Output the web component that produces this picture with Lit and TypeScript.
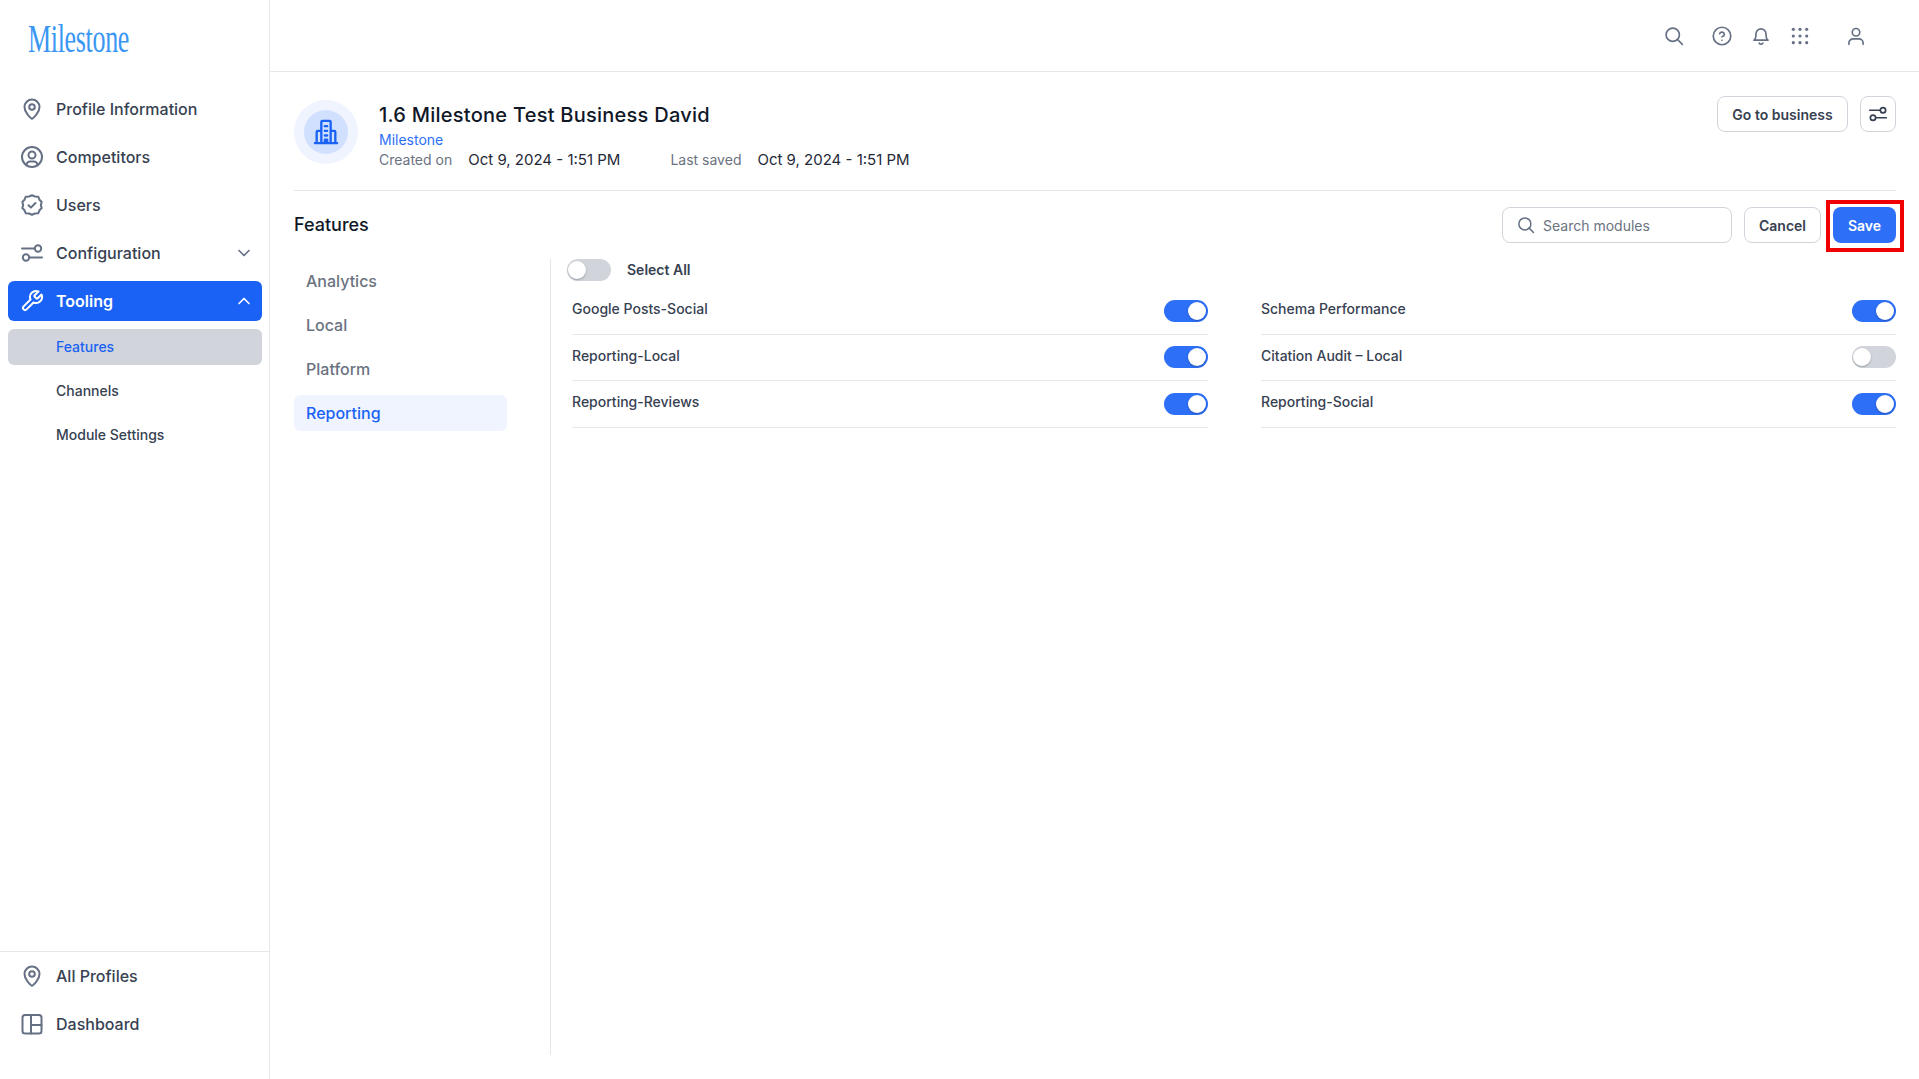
import { LitElement, html, css, svg } from 'lit';
import { customElement } from 'lit/decorators.js';

const icon = (body: unknown, size = 24) => html`
  <svg class="icon" width=${size} height=${size} viewBox="0 0 24 24" fill="none" stroke="currentColor"
    stroke-width="2" stroke-linecap="round" stroke-linejoin="round" aria-hidden="true">${body}</svg>
`;

const pin = svg`<path d="M12 21.8c-.5 0-2.6-2-4.300-4.100C5.900 15.500 4.500 13 4.500 10a7.500 7.500 0 0 1 15 0c0 3-1.400 5.500-3.200 7.700-1.700 2.100-3.800 4.100-4.300 4.100Z"/><circle cx="12" cy="10" r="2.800"/>`;
const person = svg`<circle cx="12" cy="12" r="10"/><circle cx="12" cy="10" r="3.500"/><path d="M6.500 19.500c.6-2 2-3 3.500-3h4c1.500 0 2.900 1 3.500 3"/>`;
const badge = svg`<path d="m12 2.300 3 1.200 3.200.2 1.300 3 2.200 2.300L20.800 12l.9 3-2.200 2.300-1.300 3-3.200.2-3 1.200-3-1.200-3.200-.2-1.300-3L2.300 15l.9-3-.9-3 2.200-2.300 1.300-3 3.200-.2 3-1.200Z"/><path d="m8.500 12.300 2.400 2.300 4.600-4.600"/>`;
const sliders = svg`<path d="M2 7.500h12.500M9.500 16.500H22"/><circle cx="18" cy="7.500" r="3.200"/><circle cx="6" cy="16.500" r="3.200"/>`;
const wrench = svg`<path d="M14.700 6.300a1 1 0 0 0 0 1.400l1.600 1.600a1 1 0 0 0 1.400 0l3.770-3.770a6 6 0 0 1-7.940 7.940l-6.910 6.910a2.120 2.120 0 0 1-3-3l6.910-6.910a6 6 0 0 1 7.940-7.940l-3.760 3.760z"/>`;
const layout = svg`<rect x="2.500" y="3" width="19" height="18.500" rx="2.500"/><path d="M11 3v18.500M11 13h10.500"/>`;
const chevDown = svg`<path d="m6 9 6 6 6-6"/>`;
const chevUp = svg`<path d="m6 15 6-6 6 6"/>`;
const search = svg`<circle cx="10.500" cy="10.500" r="8"/><path d="m22 22-5.800-5.800"/>`;
const help = svg`<circle cx="12" cy="12" r="10.500"/><path d="M9.200 9.200a2.900 2.900 0 0 1 5.600 1c0 1.900-2.800 2.700-2.800 2.700"/><path d="M12 17.200h.01"/>`;
const bell = svg`<path d="M6 9.500a6 6 0 0 1 12 0c0 6 2.500 7.500 2.500 7.500h-17S6 15.500 6 9.500Z"/><path d="M9.800 20.500a2.500 2.500 0 0 0 4.400 0"/>`;
const user = svg`<circle cx="12" cy="7.500" r="4.500"/><path d="M3.500 22v-1.500a5 5 0 0 1 5-5h7a5 5 0 0 1 5 5V22"/>`;
const grid = svg`${[4, 12, 20].flatMap((y) =>
  [4, 12, 20].map((x) => svg`<circle cx=${x} cy=${y} r="1.900" fill="currentColor" stroke="none"/>`),
)}`;
const building = svg`<path d="M2.500 21.500h19M8 21.500V3.500a1 1 0 0 1 1-1h6a1 1 0 0 1 1 1v18M8 11H5a1 1 0 0 0-1 1v9.500M16 11h3a1 1 0 0 1 1 1v9.500M11 7h2M11 11h2M11 15h2M11 21v-2.500h2V21"/>`;

interface Feature {
  name: string;
  on: boolean;
}

const leftFeatures: Feature[] = [
  { name: 'Google Posts-Social', on: true },
  { name: 'Reporting-Local', on: true },
  { name: 'Reporting-Reviews', on: true },
];

const rightFeatures: Feature[] = [
  { name: 'Schema Performance', on: true },
  { name: 'Citation Audit – Local', on: false },
  { name: 'Reporting-Social', on: true },
];

@customElement('app-root')
export class AppRoot extends LitElement {
  static styles = css`
    :host {
      display: grid;
      grid-template-columns: 270px 1fr;
      height: 100vh;
      background: #fff;
      font-family: Inter, 'Liberation Sans', sans-serif;
      color: #374151;
    }

    * {
      box-sizing: border-box;
    }

    .icon {
      flex: none;
      display: block;
    }

    /* sidebar */
    .sidebar {
      display: flex;
      flex-direction: column;
      border-right: 1px solid #e5e7eb;
    }

    .logo {
      height: 89px;
      padding: 18px 0 0 28px;
      color: #3a97f3;
      font-family: 'Liberation Serif', serif;
      font-size: 40px;
      line-height: 42px;
      letter-spacing: -0.5px;
      white-space: nowrap;
      transform: scaleX(0.65);
      transform-origin: 28px 0;
    }

    .nav {
      flex: 1;
      display: flex;
      flex-direction: column;
      gap: 8px;
      padding: 0 7px 0 8px;
    }

    .item {
      display: flex;
      align-items: center;
      gap: 12px;
      height: 40px;
      padding: 0 12px;
      border-radius: 6px;
      font-size: 16px;
      font-weight: 500;
      color: #374151;
    }

    .item .icon:first-child {
      color: #667085;
    }

    .item .chev {
      margin-left: auto;
      margin-right: -4px;
      color: #667085;
    }

    .item.active {
      background: #1a62f5;
      color: #fff;
      font-weight: 600;
    }

    .item.active .icon {
      color: #fff;
    }

    .sub {
      display: flex;
      align-items: center;
      height: 36px;
      padding: 0 0 2px 48px;
      border-radius: 6px;
      font-size: 14px;
      font-weight: 500;
      color: #374151;
    }

    .sub.active {
      background: #d1d5db;
      color: #1a62f5;
    }

    .foot {
      display: flex;
      flex-direction: column;
      gap: 8px;
      padding: 4px 7px 35px 8px;
      border-top: 1px solid #e5e7eb;
    }

    /* main */
    .main {
      display: flex;
      flex-direction: column;
      min-width: 0;
    }

    .topbar {
      display: flex;
      align-items: center;
      justify-content: flex-end;
      gap: 19px;
      height: 72px;
      padding-right: 53px;
      border-bottom: 1px solid #e5e7eb;
      color: #667085;
    }

    .topbar .first {
      margin-right: 9px;
    }

    .topbar .last {
      margin-left: 17px;
    }

    .content {
      flex: 1;
      display: flex;
      flex-direction: column;
      padding: 0 23px 24px 24px;
      min-height: 0;
    }

    .business {
      display: flex;
      align-items: flex-start;
      padding: 24px 0 20px;
      border-bottom: 1px solid #e5e7eb;
    }

    .avatar {
      width: 64px;
      height: 64px;
      margin-top: 4px;
      display: flex;
      align-items: center;
      justify-content: center;
      border-radius: 50%;
      background: #eff4ff;
    }

    .avatar-inner {
      width: 44px;
      height: 44px;
      display: flex;
      align-items: center;
      justify-content: center;
      border-radius: 50%;
      background: #d1e0ff;
      color: #1a62f5;
    }

    .info {
      margin: 5px 0 0 21px;
    }

    .title {
      font-size: 20px;
      line-height: 28px;
      font-weight: 500;
      letter-spacing: 0.25px;
      color: #101828;
    }

    .org {
      margin-top: 1px;
      font-size: 14px;
      line-height: 20px;
      color: #2d6ff7;
    }

    .dates {
      display: flex;
      font-size: 14px;
      line-height: 20px;
      color: #6b7280;
    }

    .dates b {
      font-size: 15px;
      font-weight: 400;
      color: #1f2937;
    }

    .dates .created {
      margin-right: 16px;
    }

    .dates .saved {
      margin: 0 16px 0 50px;
    }

    .actions {
      margin-left: auto;
      display: flex;
      gap: 12px;
    }

    .btn {
      display: flex;
      align-items: center;
      justify-content: center;
      height: 36px;
      padding: 0;
      border: 1px solid #d1d5db;
      border-radius: 8px;
      background: #fff;
      font: 600 14px Inter, 'Liberation Sans', sans-serif;
      color: #374151;
    }

    .btn.go {
      width: 131px;
    }

    .btn.cancel {
      width: 77px;
    }

    .btn.square {
      width: 36px;
    }

    .btn.primary {
      position: relative;
      width: 63px;
      border: none;
      background: #2d6ff7;
      color: #fff;
    }

    .btn.primary::after {
      content: '';
      position: absolute;
      inset: -7px -8px -9px -7px;
      border: 4px solid #f00000;
    }

    .toolbar {
      display: flex;
      align-items: center;
      justify-content: space-between;
      padding: 16px 0;
    }

    .toolbar h2 {
      margin: 0;
      padding-bottom: 2px;
      font-size: 18px;
      font-weight: 500;
      color: #101828;
    }

    .search {
      display: flex;
      align-items: center;
      gap: 8px;
      width: 230px;
      height: 36px;
      padding: 0 14px;
      border: 1px solid #d1d5db;
      border-radius: 8px;
      color: #667085;
    }

    .search input {
      flex: 1;
      min-width: 0;
      border: none;
      outline: none;
      padding: 0;
      font: 400 14px Inter, 'Liberation Sans', sans-serif;
    }

    .search input::placeholder {
      color: #6b7280;
      opacity: 1;
    }

    .body {
      flex: 1;
      display: flex;
      min-height: 0;
    }

    .cats {
      flex: none;
      width: 256px;
      display: flex;
      flex-direction: column;
      gap: 8px;
      padding-top: 4px;
    }

    .cat {
      display: flex;
      align-items: center;
      width: 213px;
      height: 36px;
      padding-left: 12px;
      border-radius: 6px;
      font-size: 16px;
      font-weight: 500;
      color: #6b7280;
    }

    .cat.active {
      background: #eff4ff;
      color: #1a62f5;
    }

    .panel {
      flex: 1;
      min-width: 0;
      border-left: 1px solid #e5e7eb;
    }

    .select-all {
      display: flex;
      align-items: center;
      gap: 16px;
      height: 22px;
      margin: 0 0 7.6px 16px;
      font-size: 14px;
      font-weight: 600;
    }

    .select-all span {
      margin-bottom: 2px;
    }

    .columns {
      display: grid;
      grid-template-columns: 636px 635px;
      justify-content: space-between;
      padding-left: 21px;
    }

    .row {
      display: flex;
      align-items: center;
      justify-content: space-between;
      height: 46.4px;
      border-bottom: 1px solid #e5e7eb;
      font-size: 14px;
      font-weight: 500;
    }

    .row span {
      margin-bottom: 5px;
    }

    .row .toggle {
      margin-bottom: 1px;
    }

    .toggle {
      flex: none;
      width: 44px;
      height: 22px;
      padding: 2px;
      display: flex;
      border-radius: 11px;
      background: #d1d5db;
    }

    .toggle i {
      width: 18px;
      height: 18px;
      border-radius: 50%;
      background: #fff;
      box-shadow: 0 1px 2px rgba(16, 24, 40, 0.3);
    }

    .toggle.off {
      padding-left: 1px;
    }

    .toggle.on {
      justify-content: flex-end;
      background: #2d6ff7;
    }
  `;

  private toggle(on: boolean) {
    return html`<div class="toggle ${on ? 'on' : 'off'}"><i></i></div>`;
  }

  private row(f: Feature) {
    return html`<div class="row"><span>${f.name}</span>${this.toggle(f.on)}</div>`;
  }

  render() {
    return html`
      <aside class="sidebar">
        <div class="logo">Milestone</div>
        <nav class="nav">
          <div class="item">${icon(pin)}Profile Information</div>
          <div class="item">${icon(person)}Competitors</div>
          <div class="item">${icon(badge)}Users</div>
          <div class="item">${icon(sliders)}Configuration<span class="chev">${icon(chevDown, 20)}</span></div>
          <div class="item active">${icon(wrench)}Tooling<span class="chev">${icon(chevUp, 20)}</span></div>
          <div class="sub active">Features</div>
          <div class="sub">Channels</div>
          <div class="sub">Module Settings</div>
        </nav>
        <div class="foot">
          <div class="item">${icon(pin)}All Profiles</div>
          <div class="item">${icon(layout)}Dashboard</div>
        </div>
      </aside>
      <div class="main">
        <header class="topbar">
          <span class="first">${icon(search, 20)}</span>
          ${icon(help, 20)} ${icon(bell, 20)} ${icon(grid, 20)}
          <span class="last">${icon(user, 20)}</span>
        </header>
        <div class="content">
          <section class="business">
            <div class="avatar"><div class="avatar-inner">${icon(building, 28)}</div></div>
            <div class="info">
              <div class="title">1.6 Milestone Test Business David</div>
              <div class="org">Milestone</div>
              <div class="dates">
                <span class="created">Created on</span><b>Oct 9, 2024 - 1:51 PM</b>
                <span class="saved">Last saved</span><b>Oct 9, 2024 - 1:51 PM</b>
              </div>
            </div>
            <div class="actions">
              <button class="btn go">Go to business</button>
              <button class="btn square">${icon(sliders, 20)}</button>
            </div>
          </section>
          <section class="toolbar">
            <h2>Features</h2>
            <div class="actions">
              <label class="search">${icon(search, 18)}<input placeholder="Search modules" /></label>
              <button class="btn cancel">Cancel</button>
              <button class="btn primary">Save</button>
            </div>
          </section>
          <section class="body">
            <div class="cats">
              <div class="cat">Analytics</div>
              <div class="cat">Local</div>
              <div class="cat">Platform</div>
              <div class="cat active">Reporting</div>
            </div>
            <div class="panel">
              <div class="select-all">${this.toggle(false)}<span>Select All</span></div>
              <div class="columns">
                <div>${leftFeatures.map((f) => this.row(f))}</div>
                <div>${rightFeatures.map((f) => this.row(f))}</div>
              </div>
            </div>
          </section>
        </div>
      </div>
    `;
  }
}
